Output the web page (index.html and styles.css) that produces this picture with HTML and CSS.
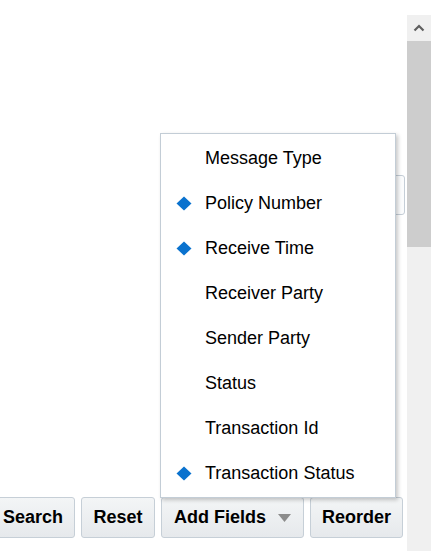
FILE: index.html
```html
<!DOCTYPE html>
<html lang="en">
<head>
<meta charset="utf-8">
<title>Add Fields</title>
<link rel="stylesheet" href="styles.css">
</head>
<body>
<div class="page">
  <div class="content">
    <div class="field-row">
      <div class="field"></div>
    </div>
    <div class="buttons">
      <button class="btn">Search</button>
      <button class="btn">Reset</button>
      <button class="btn btn-menu">Add Fields
        <svg class="caret" width="13" height="8" viewBox="0 0 13 8"><path d="M0 0H13L6.5 8Z" fill="#8c8c8c"/></svg>
      </button>
      <button class="btn">Reorder</button>
    </div>
    <ul class="menu">
      <li class="item">Message Type</li>
      <li class="item checked"><svg class="mark" width="16" height="15" viewBox="0 0 16 15"><path d="M8 0.5L15.5 7.5 8 14.5 0.5 7.5Z" fill="#0a72ce"/></svg>Policy Number</li>
      <li class="item checked"><svg class="mark" width="16" height="15" viewBox="0 0 16 15"><path d="M8 0.5L15.5 7.5 8 14.5 0.5 7.5Z" fill="#0a72ce"/></svg>Receive Time</li>
      <li class="item">Receiver Party</li>
      <li class="item">Sender Party</li>
      <li class="item">Status</li>
      <li class="item">Transaction Id</li>
      <li class="item checked"><svg class="mark" width="16" height="15" viewBox="0 0 16 15"><path d="M8 0.5L15.5 7.5 8 14.5 0.5 7.5Z" fill="#0a72ce"/></svg>Transaction Status</li>
    </ul>
  </div>
  <div class="scrollbar">
    <div class="sb-up">
      <svg width="12" height="8" viewBox="0 0 12 8"><path d="M1.5 6.5L6 2 10.5 6.5" fill="none" stroke="#5f5f5f" stroke-width="2.2"/></svg>
    </div>
    <div class="sb-thumb"></div>
    <div class="sb-track"></div>
  </div>
</div>
</body>
</html>
```
FILE: styles.css
```css
html, body {
  margin: 0;
  padding: 0;
  background: #ffffff;
}
body {
  width: 431px;
  height: 551px;
  overflow: hidden;
  font-family: "Liberation Sans", Arial, sans-serif;
  color: #000000;
}
.page {
  display: flex;
  height: 551px;
}
.content {
  position: relative;
  flex: 1;
  display: flex;
  flex-direction: column;
  padding: 175px 0 13px 0;
  box-sizing: border-box;
}
.field-row {
  display: flex;
  justify-content: flex-end;
  padding-right: 2px;
}
.field {
  width: 220px;
  height: 40px;
  box-sizing: border-box;
  border: 1px solid #c5ced7;
  border-radius: 3px;
  background: #fbfcfd;
}
.buttons {
  margin-top: auto;
  display: flex;
  gap: 6px;
  margin-left: -9px;
}
.btn {
  flex-shrink: 0;
  min-width: 74px;
  height: 41px;
  box-sizing: border-box;
  padding: 0 11px;
  border: 1px solid #c6cfd7;
  border-radius: 3px;
  background: linear-gradient(#f3f5f6, #e6e9ec);
  font-family: "Liberation Sans", Arial, sans-serif;
  font-size: 18px;
  font-weight: bold;
  color: #000000;
  display: flex;
  align-items: center;
  justify-content: center;
}
.btn-menu {
  padding: 0 12px;
  gap: 12px;
}
.caret {
  display: block;
  margin-top: 1px;
}
.menu {
  position: absolute;
  left: 160px;
  top: 133px;
  width: 236px;
  box-sizing: border-box;
  margin: 0;
  padding: 2px 0 1px 0;
  list-style: none;
  background: #ffffff;
  border: 1px solid #c3cdd6;
  box-shadow: 2px 2px 4px rgba(0, 0, 0, 0.22);
  z-index: 2;
}
.item {
  position: relative;
  height: 45px;
  display: flex;
  align-items: center;
  padding-left: 44px;
  font-size: 18px;
  white-space: nowrap;
}
.mark {
  position: absolute;
  left: 15px;
  top: 15px;
}
.scrollbar {
  width: 24px;
  margin-top: 15px;
  display: flex;
  flex-direction: column;
  background: #f0f0f0;
}
.sb-up {
  height: 26px;
  display: flex;
  align-items: center;
  justify-content: center;
  background: #f0f0f0;
}
.sb-thumb {
  height: 206px;
  background: #cdcdcd;
}
.sb-track {
  flex: 1;
  background: #f0f0f0;
}
```
